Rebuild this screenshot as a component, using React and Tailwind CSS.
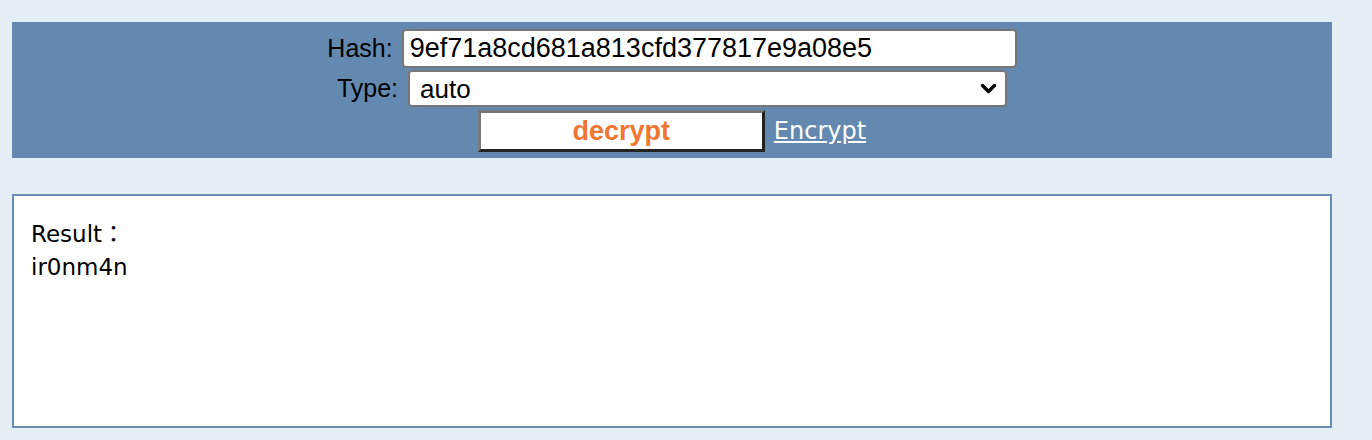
import React from "react";

export default function App() {
  return (
    <div className="min-h-screen bg-[#e3eef5] pl-3 pr-10 pt-[22px] pb-3">
      <div className="bg-[#6489b0] pt-[7px] pb-[6px] flex flex-col items-center font-['Liberation_Sans',Arial,sans-serif] text-[25px] text-black">
        <div className="flex items-center">
          <span className="mr-[9px] leading-none">Hash:</span>
          <input
            readOnly
            value="9ef71a8cd681a813cfd377817e9a08e5"
            className="w-[615px] h-[39px] border-2 border-[#767676] rounded-[4px] bg-white px-[6px] text-[27px] text-black outline-none font-['Liberation_Sans',Arial,sans-serif]"
          />
        </div>
        <div className="flex items-center mt-[2px]">
          <span className="mr-[10px] leading-none">Type:</span>
          <div className="relative w-[599px] h-[37px] border-2 border-[#767676] rounded-[4px] bg-white flex items-center pl-[10px]">
            <span className="leading-none text-[26px]">auto</span>
            <svg
              className="absolute right-[8px] top-1/2 -translate-y-1/2"
              width="17"
              height="12"
              viewBox="0 0 17 12"
            >
              <path d="M2.5 2.5 L8.5 8.5 L14.5 2.5" fill="none" stroke="#000" strokeWidth="3.4" strokeLinecap="round" strokeLinejoin="round" />
            </svg>
          </div>
        </div>
        <div className="flex items-center mt-[3px]">
          <button className="w-[287px] h-[42px] bg-white border-[3px] border-t-[#777777] border-l-[#777777] border-b-[#222222] border-r-[#222222] text-[#f07632] font-bold text-[27px] leading-none font-['Liberation_Sans',Arial,sans-serif]">
            decrypt
          </button>
          <a className="ml-[9px] text-white underline text-[24px] font-['DejaVu_Sans',Verdana,sans-serif] leading-none">
            Encrypt
          </a>
        </div>
      </div>
      <div className="mt-[36px] h-[234px] border-2 border-[#6a8cb5] bg-white px-[17px] pt-[20px] font-['DejaVu_Sans',Verdana,sans-serif] text-[23px] leading-[33px] text-black">
        <div>
          Result<span className="font-['Noto_Sans_CJK_JP','Noto_Sans_CJK_TC',sans-serif]">：</span>
        </div>
        <div>ir0nm4n</div>
      </div>
    </div>
  );
}
